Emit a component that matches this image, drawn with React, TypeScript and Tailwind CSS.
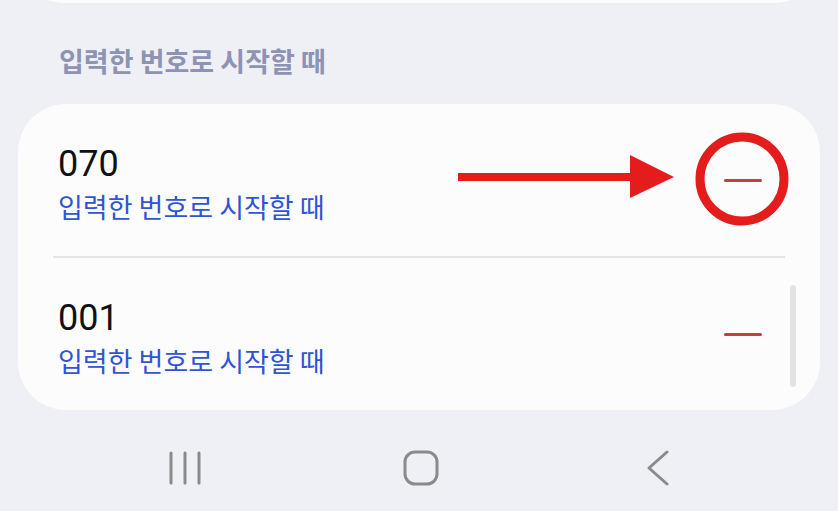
import React from "react";

const KR = "font-['Noto_Sans_CJK_KR','Noto_Sans',sans-serif]";

function Row({ num, showDivider }: { num: string; showDivider?: boolean }) {
  return (
    <>
      <div className="flex h-[152px] items-center justify-between pl-[40px] pr-[58px]">
        <div className="flex flex-col pt-[8px]">
          <span className="font-['Roboto',sans-serif] text-[36px] leading-[42px] text-[#111]">{num}</span>
          <span className={`${KR} mt-[4px] text-[27px] leading-[36px] text-[#2f54d6]`}>
            입력한 번호로 시작할 때
          </span>
        </div>
        <div className="h-[3px] w-[38px] rounded-full bg-[#c4403f]" />
      </div>
      {showDivider && <div className="mx-[35px] h-[2px] bg-[#e4e4e6]" />}
    </>
  );
}

export default function App() {
  return (
    <div className="h-[511px] w-[838px] overflow-hidden bg-[#eff0f5]">
      {/* previous card, mostly scrolled off */}
      <div className="mx-[18px] -mt-[47px] h-[50px] rounded-b-[45px] bg-[#fcfcfc]" />

      <div className={`${KR} pl-[59px] pt-[39px] text-[27px] font-bold leading-[38px] text-[#8e93b3]`}>
        입력한 번호로 시작할 때
      </div>

      <div className="relative mx-[18px] mt-[24px] rounded-[48px] bg-[#fcfcfc]">
        <Row num="070" showDivider />
        <Row num="001" />

        {/* scrollbar */}
        <div className="absolute left-[772px] top-[181px] h-[102px] w-[6px] rounded-full bg-[#e3e3e5]" />

        {/* annotation arrow */}
        <svg className="absolute left-[437px] top-[49px]" width="222" height="48" viewBox="0 0 222 48">
          <rect x="3" y="20" width="176" height="8" fill="#e51c1c" />
          <polygon points="175,2 175,45 219,24" fill="#e51c1c" />
        </svg>

        {/* annotation circle */}
        <svg className="absolute left-[677px] top-[28px]" width="94" height="94" viewBox="0 0 94 94">
          <circle cx="47" cy="47" r="42" fill="none" stroke="#e51c1c" strokeWidth="9" />
        </svg>
      </div>

      {/* navigation bar */}
      <div className="flex items-center pl-[169px] pt-[40px]">
        <svg width="32" height="34" viewBox="0 0 32 34" fill="none" stroke="#8a8a8a" strokeWidth="3" strokeLinecap="round">
          <line x1="2" y1="2" x2="2" y2="32" />
          <line x1="16" y1="2" x2="16" y2="32" />
          <line x1="30" y1="2" x2="30" y2="32" />
        </svg>
        <svg className="ml-[202px]" width="36" height="36" viewBox="0 0 36 36" fill="none">
          <rect x="2" y="2" width="32" height="32" rx="10" stroke="#8a8a8a" strokeWidth="3" />
        </svg>
        <svg className="ml-[206px]" width="26" height="36" viewBox="0 0 26 36" fill="none" stroke="#8a8a8a" strokeWidth="3" strokeLinecap="round" strokeLinejoin="round">
          <polyline points="22,2 4,18 22,34" />
        </svg>
      </div>
    </div>
  );
}
